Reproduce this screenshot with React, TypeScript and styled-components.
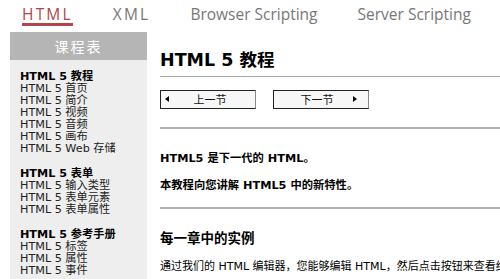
import React from 'react';
import styled, { createGlobalStyle } from 'styled-components';

const GlobalStyle = createGlobalStyle`
  body {
    margin: 0;
    background: #fff;
    font-family: 'DejaVu Sans', 'Noto Sans CJK SC', sans-serif;
    overflow: hidden;
  }
`;

const Page = styled.div`
  width: 500px;
  height: 279px;
  overflow: hidden;
`;

const Nav = styled.div`
  display: flex;
  align-items: flex-start;
  height: 32px;
  padding-left: 22px;
  gap: 40px;
  overflow: hidden;
`;

const NavItem = styled.a<{ $active?: boolean; $spaced?: boolean }>`
  display: block;
  padding-top: 5px;
  height: 18px;
  line-height: 19px;
  font-family: 'Open Sans', 'Noto Sans', sans-serif;
  font-size: 15.5px;
  color: ${(p) => (p.$active ? '#b0454a' : '#777')};
  letter-spacing: ${(p) => (p.$spaced ? '2.2px' : '0')};
  border-bottom: ${(p) => (p.$active ? '3px solid #b0454a' : '3px solid transparent')};
  white-space: nowrap;
`;

const Body = styled.div`
  display: flex;
  align-items: flex-start;
`;

const Sidebar = styled.div`
  width: 137px;
  margin-left: 10px;
  flex-shrink: 0;
  background: #eeeeee;
  height: 247px;
`;

const SideTitle = styled.div`
  height: 28px;
  line-height: 28px;
  background: #b5b5b5;
  color: #fff;
  text-align: center;
  font-family: 'Noto Sans CJK SC', sans-serif;
  font-size: 14px;
  letter-spacing: 2px;
`;

const SideList = styled.div`
  padding: 11px 10px 0;
`;

const Group = styled.div`
  margin-bottom: 13px;
`;

const SideItem = styled.div<{ $head?: boolean }>`
  height: 12px;
  font-size: 11.2px;
  line-height: 12px;
  color: ${(p) => (p.$head ? '#000' : '#222')};
  font-weight: ${(p) => (p.$head ? 'bold' : 'normal')};
  white-space: nowrap;
`;

const Main = styled.div`
  flex: 1;
  margin-left: 13px;
  min-width: 0;
`;

const Title = styled.h1`
  margin: 17px 0 0;
  padding-bottom: 5px;
  font-size: 17.5px;
  line-height: 22px;
  font-weight: bold;
  color: #000;
  border-bottom: 1px solid #aaa;
`;

const Pager = styled.div`
  display: flex;
  gap: 17px;
  margin-top: 13px;
`;

const PageButton = styled.div<{ $next?: boolean }>`
  position: relative;
  box-sizing: border-box;
  width: 96px;
  height: 19px;
  line-height: 17px;
  border: 1px solid #222;
  border-right-color: #888;
  background: #f7f7f7;
  font-family: 'Noto Sans CJK SC', sans-serif;
  font-size: 11px;
  color: #111;
  text-align: center;
  padding-left: ${(p) => (p.$next ? '0' : '4px')};
  padding-right: ${(p) => (p.$next ? '8px' : '0')};
`;

const Arrow = styled.span<{ $right?: boolean }>`
  position: absolute;
  top: 5px;
  ${(p) => (p.$right ? 'right: 11px;' : 'left: 4px;')}
  width: 0;
  height: 0;
  border-top: 3.5px solid transparent;
  border-bottom: 3.5px solid transparent;
  ${(p) => (p.$right ? 'border-left: 4px solid #000;' : 'border-right: 4px solid #000;')}
`;

const Rule = styled.div`
  height: 2px;
  background: #b0b0b0;
`;

const Section = styled.div<{ $top: number }>`
  margin-top: ${(p) => p.$top}px;
`;

const Lead = styled.p`
  margin: 0 0 15px;
  font-size: 11.3px;
  line-height: 12px;
  font-weight: bold;
  color: #000;
  white-space: nowrap;
`;

const SubTitle = styled.h2`
  margin: 0 0 15px;
  font-size: 13.5px;
  line-height: 16px;
  font-weight: bold;
  color: #000;
`;

const Text = styled.p`
  margin: 0;
  font-size: 11px;
  line-height: 12px;
  color: #000;
  white-space: nowrap;
`;

const groups = [
  {
    head: 'HTML 5 教程',
    items: ['HTML 5 首页', 'HTML 5 简介', 'HTML 5 视频', 'HTML 5 音频', 'HTML 5 画布', 'HTML 5 Web 存储'],
  },
  { head: 'HTML 5 表单', items: ['HTML 5 输入类型', 'HTML 5 表单元素', 'HTML 5 表单属性'] },
  { head: 'HTML 5 参考手册', items: ['HTML 5 标签', 'HTML 5 属性', 'HTML 5 事件'] },
];

const App = () => (
  <Page>
    <GlobalStyle />
    <Nav>
      <NavItem $active $spaced>HTML</NavItem>
      <NavItem $spaced>XML</NavItem>
      <NavItem>Browser Scripting</NavItem>
      <NavItem>Server Scripting</NavItem>
    </Nav>
    <Body>
      <Sidebar>
        <SideTitle>课程表</SideTitle>
        <SideList>
          {groups.map((g) => (
            <Group key={g.head}>
              <SideItem $head>{g.head}</SideItem>
              {g.items.map((item) => (
                <SideItem key={item}>{item}</SideItem>
              ))}
            </Group>
          ))}
        </SideList>
      </Sidebar>
      <Main>
        <Title>HTML 5 教程</Title>
        <Pager>
          <PageButton>
            <Arrow />
            上一节
          </PageButton>
          <PageButton $next>
            下一节
            <Arrow $right />
          </PageButton>
        </Pager>
        <Section $top={18}>
          <Rule />
        </Section>
        <Section $top={24}>
          <Lead>HTML5 是下一代的 HTML。</Lead>
          <Lead>本教程向您讲解 HTML5 中的新特性。</Lead>
        </Section>
        <Section $top={10}>
          <Rule />
        </Section>
        <Section $top={21}>
          <SubTitle>每一章中的实例</SubTitle>
          <Text>通过我们的 HTML 编辑器，您能够编辑 HTML，然后点击按钮来查看结果。</Text>
        </Section>
      </Main>
    </Body>
  </Page>
);

export default App;
